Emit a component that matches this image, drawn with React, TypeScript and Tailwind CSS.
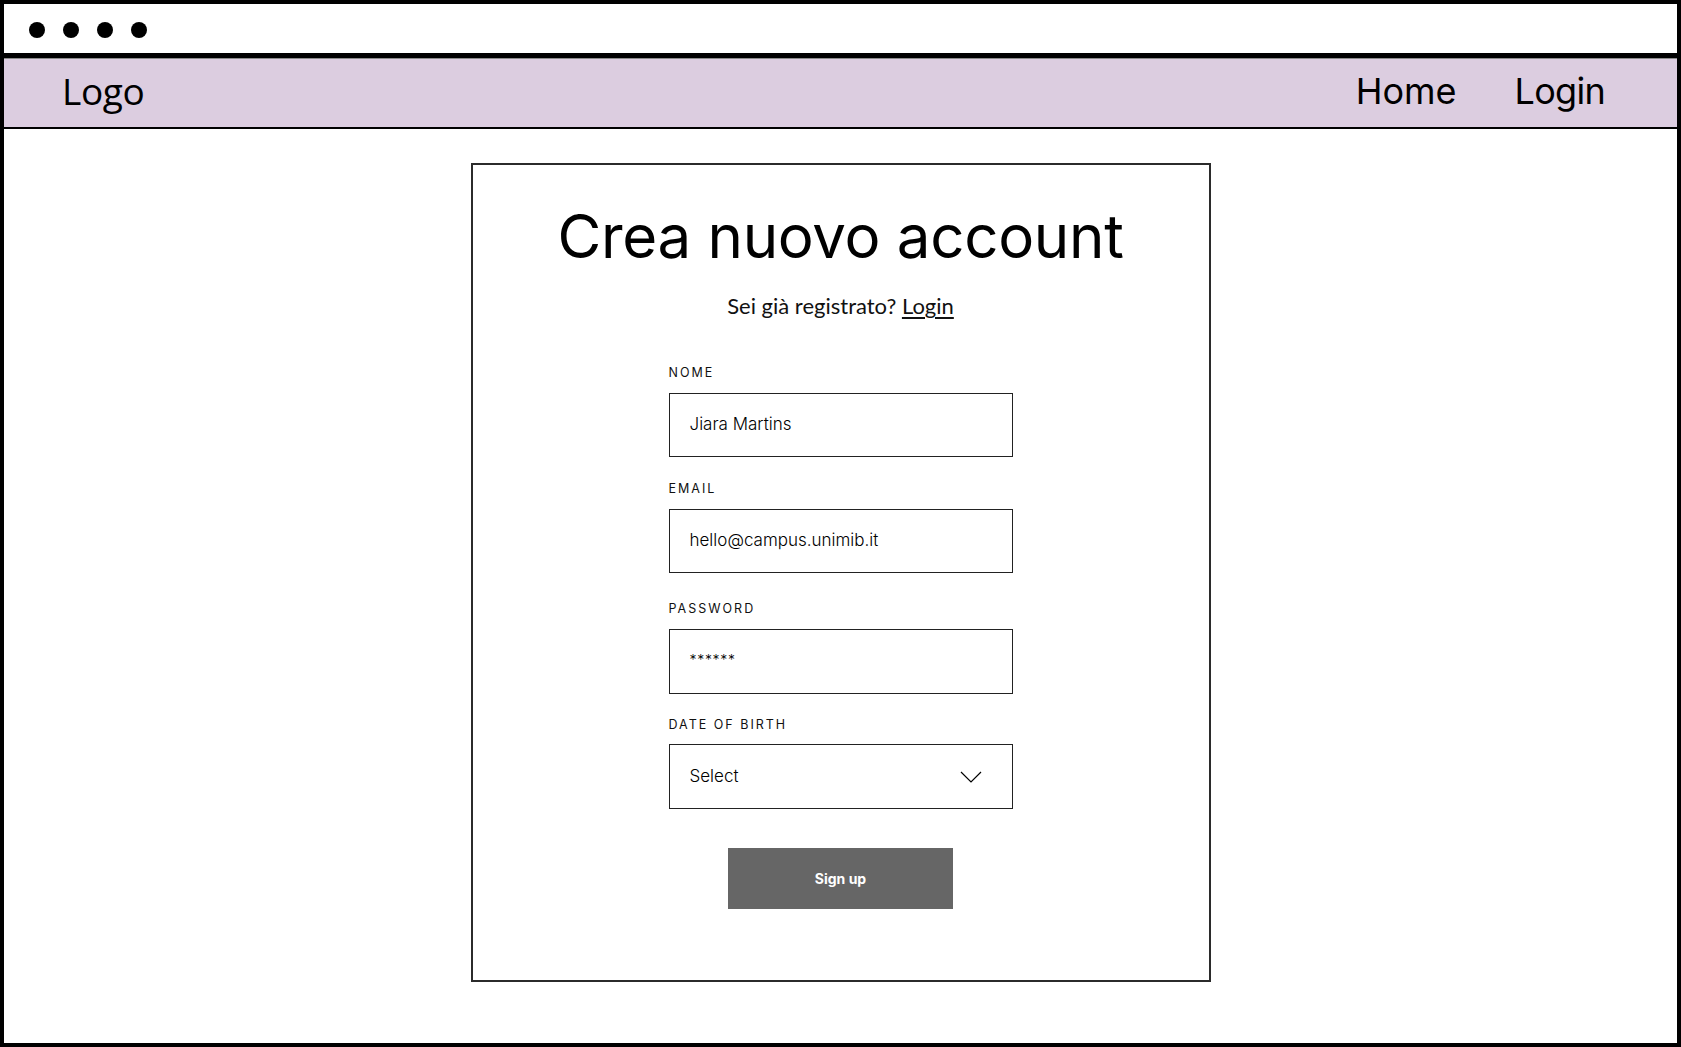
const poppins = { fontFamily: 'Inter, "Open Sans", sans-serif' }

function Field({ label, className = '', children }: { label: string; className?: string; children: React.ReactNode }) {
  return (
    <div className={`flex flex-col ${className}`}>
      <label className="text-[12.5px] leading-none tracking-[0.16em] text-[#111] uppercase mb-[13px]">{label}</label>
      {children}
    </div>
  )
}

export default function App() {
  return (
    <div
      className="w-full h-[1047px] border-4 border-black bg-white flex flex-col text-black"
      style={{ fontFamily: 'Inter, "Open Sans", sans-serif' }}
    >
      {/* browser tab bar */}
      <div className="h-[54px] shrink-0 flex items-center gap-[18px] pl-[25px] pt-[2px] border-b-[5px] border-black">
        {[0, 1, 2, 3].map((i) => (
          <span key={i} className="w-4 h-4 rounded-full bg-black" />
        ))}
      </div>

      {/* navbar */}
      <nav className="h-[71px] shrink-0 bg-[#dccde0] border-t border-[#8a8a8a] border-b-2 border-b-black flex items-center justify-between pl-[58px] pr-[72px] pb-[5px]">
        <span className="text-[37px] leading-none tracking-[-0.01em]" style={{ fontFamily: '"Open Sans", sans-serif' }}>
          Logo
        </span>
        <div className="flex items-center gap-[58px] text-[36px] leading-none">
          <a>Home</a>
          <a className="tracking-[-0.02em]">Login</a>
        </div>
      </nav>

      {/* content */}
      <main className="flex-1 flex justify-center pt-[34px]">
        <div className="w-[740px] h-[819px] border-2 border-[#2b2b2b] flex flex-col items-center pt-[41px]">
          <h1 className="text-[60px] leading-none font-normal tracking-[-0.005em]" style={poppins}>
            Crea nuovo account
          </h1>
          <p className="mt-[29px] text-[22px] leading-none text-[#111]" style={{ fontFamily: 'Lato, sans-serif' }}>
            Sei già registrato? <span className="underline underline-offset-[3px]">Login</span>
          </p>

          <form className="w-[344px] mt-[50px] flex flex-col gap-[25px]" onSubmit={(e) => e.preventDefault()}>
            <Field label="Nome">
              <div className="h-[64px] border border-[#222] flex items-center px-5 text-[17px] font-light">Jiara Martins</div>
            </Field>
            <Field label="Email" className="mt-[1px]">
              <div className="h-[64px] border border-[#222] flex items-center px-5 mt-[1px] text-[17px] font-light">hello@campus.unimib.it</div>
            </Field>
            <Field label="Password" className="mt-[5px]">
              <div className="h-[65px] border border-[#222] flex items-center px-5 pb-[4px] text-[14px] font-light tracking-[0.05em]">******</div>
            </Field>
            <Field label="Date of birth">
              <div className="h-[65px] border border-[#222] flex items-center justify-between pl-5 pr-[30px] text-[17px] font-light">
                <span>Select</span>
                <svg width="22" height="12" viewBox="0 0 22 12" fill="none" stroke="black" strokeWidth="1.2">
                  <path d="M1 1 L11 11 L21 1" />
                </svg>
              </div>
            </Field>
          </form>

          <button className="mt-[39px] w-[225px] h-[61px] bg-[#666666] text-white text-[14px] font-bold">
            Sign up
          </button>
        </div>
      </main>
    </div>
  )
}
